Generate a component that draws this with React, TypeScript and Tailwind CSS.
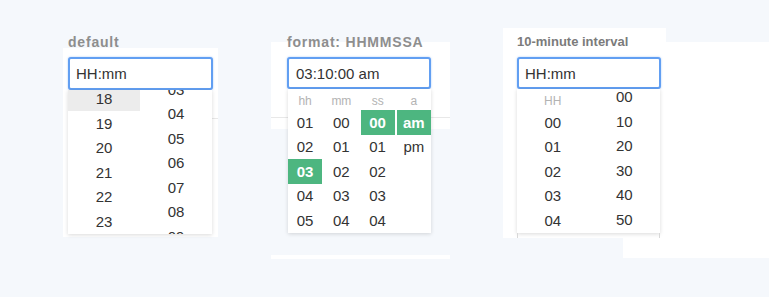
import React from "react";

const FONT = { fontFamily: '"Liberation Sans", Arial, Helvetica, sans-serif' };

function Cell({
  children,
  active,
  green,
}: {
  children?: React.ReactNode;
  active?: boolean;
  green?: boolean;
}) {
  return (
    <div
      className={`flex h-[24.5px] items-center justify-center pt-[1px] text-[15px] ${
        green
          ? "bg-[#4db680] font-bold text-white"
          : active
            ? "bg-[#ececec] text-[#333]"
            : "text-[#333]"
      }`}
    >
      {children}
    </div>
  );
}

function Head({ children }: { children: React.ReactNode }) {
  return (
    <div className="flex h-[21px] items-center justify-center pt-[2px] text-[12px] text-[#b3b3b3]">
      {children}
    </div>
  );
}

function Label({
  children,
  small,
}: {
  children: React.ReactNode;
  small?: boolean;
}) {
  return (
    <div
      className={`h-[14px] leading-[14px] font-bold ${
        small
          ? "text-[13px] text-[#7b7b7b]"
          : "text-[14px] tracking-[0.8px] text-[#8e8e8e]"
      }`}
    >
      {children}
    </div>
  );
}

function Input({ value, tall, pad }: { value: string; tall?: boolean; pad?: boolean }) {
  return (
    <div
      className={`mt-[8px] flex items-center rounded-[3px] border-2 border-[#629ff2] bg-white pt-[2px] text-[15px] text-[#333] shadow-[0_0_2px_rgba(98,159,242,0.6)] ${
        tall ? "h-[33px]" : "h-[32px]"
      } ${pad ? "pl-[7px]" : "pl-[6px]"}`}
    >
      {value}
    </div>
  );
}

export default function App() {
  const hours = ["18", "19", "20", "21", "22", "23"];
  const mins = ["03", "04", "05", "06", "07", "08", "09"];

  return (
    <div
      className="relative h-[297px] w-[769px] overflow-hidden bg-[#f5f8fc]"
      style={FONT}
    >
      {/* white patches behind the demos */}
      <div className="absolute top-[48px] left-[63px] h-[189px] w-[155px] bg-white">
        <div className="absolute top-[70px] right-0 h-px w-[8px] bg-[#e8e8e8]" />
      </div>
      <div className="absolute top-[42px] left-[271px] h-[87px] w-[179px] bg-white">
        <div className="absolute top-[75px] left-0 h-px w-full bg-[#e8e8e8]" />
      </div>
      <div className="absolute top-[255px] left-[271px] h-[4px] w-[179px] bg-white" />
      <div className="absolute top-[28px] left-[503px] h-[210px] w-[163px] bg-white" />
      <div className="absolute top-[42px] left-[623px] h-[216px] w-[146px] bg-white" />

      <div className="relative flex pt-[35px] pl-[68px]">
        {/* default */}
        <div className="w-[145px]">
          <Label>default</Label>
          <Input value="HH:mm" tall />
          <div className="grid h-[144px] w-[144px] grid-cols-2 overflow-hidden bg-white shadow-[0_1px_4px_rgba(0,0,0,0.15)]">
            <div className="-mt-[3.5px]">
              {hours.map((h, i) => (
                <Cell key={h} active={i === 0}>
                  {h}
                </Cell>
              ))}
            </div>
            <div className="-mt-[12.75px]">
              {mins.map((m) => (
                <Cell key={m}>{m}</Cell>
              ))}
            </div>
          </div>
        </div>

        {/* format */}
        <div className="ml-[74px] w-[144px]">
          <Label>format: HHMMSSA</Label>
          <Input value="03:10:00 am" pad />
          <div className="ml-px h-[144px] w-[143px] overflow-hidden bg-white shadow-[0_1px_4px_rgba(0,0,0,0.15)]">
            <div className="grid grid-cols-4 gap-x-[2px]">
              <div>
                <Head>hh</Head>
                <Cell>01</Cell>
                <Cell>02</Cell>
                <Cell green>03</Cell>
                <Cell>04</Cell>
                <Cell>05</Cell>
              </div>
              <div>
                <Head>mm</Head>
                <Cell>00</Cell>
                <Cell>01</Cell>
                <Cell>02</Cell>
                <Cell>03</Cell>
                <Cell>04</Cell>
              </div>
              <div>
                <Head>ss</Head>
                <Cell green>00</Cell>
                <Cell>01</Cell>
                <Cell>02</Cell>
                <Cell>03</Cell>
                <Cell>04</Cell>
              </div>
              <div>
                <Head>a</Head>
                <Cell green>am</Cell>
                <Cell>pm</Cell>
              </div>
            </div>
          </div>
        </div>

        {/* 10-minute interval */}
        <div className="ml-[86px] w-[144px]">
          <Label small>10-minute interval</Label>
          <Input value="HH:mm" />
          <div className="grid h-[144px] w-[143px] grid-cols-2 overflow-hidden bg-white shadow-[0_1px_4px_rgba(0,0,0,0.15)]">
            <div>
              <Head>HH</Head>
              {["00", "01", "02", "03", "04"].map((h) => (
                <Cell key={h}>{h}</Cell>
              ))}
            </div>
            <div className="-mt-[4.25px]">
              {["00", "10", "20", "30", "40", "50"].map((m) => (
                <Cell key={m}>{m}</Cell>
              ))}
            </div>
          </div>
          <div className="h-[5px] w-[143px] border-x border-[#d8d8d8]" />
        </div>
      </div>
    </div>
  );
}
